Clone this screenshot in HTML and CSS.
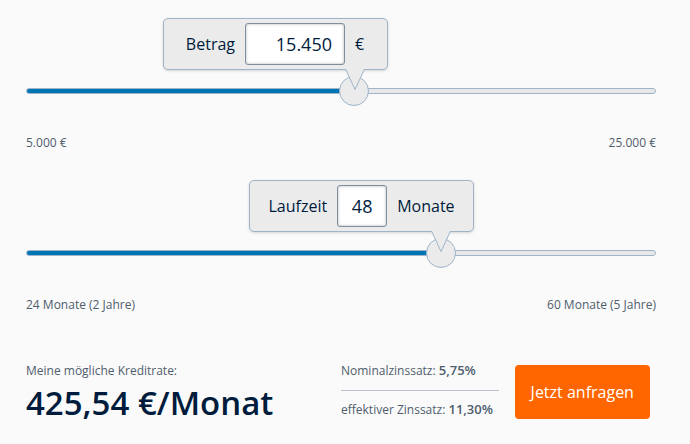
FILE: index.html
```html
<!DOCTYPE html>
<html lang="de">
<head>
    <meta charset="UTF-8">
    <meta name="viewport" content="width=device-width, initial-scale=1.0">
    <title>Kreditrechner</title>
    <link rel="stylesheet" href="styles.css">
</head>
<body>
    <form class="calculator">
        <div class="slider" style="--pos: 0.5225">
            <div class="bubble">
                <label for="amount">Betrag</label>
                <input class="value amount" type="text" id="amount" value="15.450">
                <span class="unit">€</span>
            </div>
            <input class="range" type="range" min="5000" max="25000" step="50" value="15450" aria-label="Betrag">
            <svg class="pointer" width="20" height="22" viewBox="0 0 20 22">
                <path d="M0.5 0 L10 20.5 L19.5 0" fill="#ebebeb" stroke="#9fb4c9"/>
            </svg>
            <div class="limits">
                <span>5.000 €</span>
                <span>25.000 €</span>
            </div>
        </div>

        <div class="slider" style="--pos: 0.6667">
            <div class="bubble">
                <label for="duration">Laufzeit</label>
                <input class="value duration" type="text" id="duration" value="48">
                <span class="unit">Monate</span>
            </div>
            <input class="range" type="range" min="24" max="60" step="12" value="48" aria-label="Laufzeit">
            <svg class="pointer" width="20" height="22" viewBox="0 0 20 22">
                <path d="M0.5 0 L10 20.5 L19.5 0" fill="#ebebeb" stroke="#9fb4c9"/>
            </svg>
            <div class="limits">
                <span>24 Monate (2 Jahre)</span>
                <span>60 Monate (5 Jahre)</span>
            </div>
        </div>

        <div class="summary">
            <div class="rate">
                <div>Meine mögliche Kreditrate:</div>
                <div class="rate-value">425,54 €/Monat</div>
            </div>
            <div class="interest">
                <div class="interest-row">Nominalzinssatz: <strong>5,75%</strong></div>
                <div class="interest-row">effektiver Zinssatz: <strong>11,30%</strong></div>
            </div>
            <button class="submit" type="button">Jetzt anfragen</button>
        </div>
    </form>
</body>
</html>
```
FILE: styles.css
```css
* {
    box-sizing: border-box;
}

body {
    margin: 0;
    padding: 18px 34px 20px 26px;
    background-color: #fafafa;
    color: #4f5d6d;
    font-family: "Open Sans", "Noto Sans", sans-serif;
    font-size: 12px;
    line-height: 18px;
}

.slider {
    position: relative;
    padding-top: 58px;
    margin-bottom: 28px;
    --thumb: calc((100% - 30px) * var(--pos) + 15px);
}

/* value box above the handle */
.bubble {
    position: absolute;
    top: 0;
    right: calc(100% - var(--thumb) - 33px);
    width: 225px;
    height: 52px;
    display: flex;
    align-items: center;
    justify-content: center;
    gap: 10px;
    background-color: #ebebeb;
    border: 1px solid #9fb4c9;
    border-radius: 5px;
    box-shadow: 0 1px 3px rgba(0, 0, 0, 0.15);
    color: #001c3d;
    font-size: 16px;
}

.value {
    height: 42px;
    border: 1px solid #7d8f9f;
    border-radius: 3px;
    background-color: #fff;
    box-shadow: inset 0 0 3px rgba(0, 0, 0, 0.3);
    color: #001c3d;
    font-family: inherit;
    font-size: 18px;
}

.amount {
    width: 100px;
    padding: 0 12px;
    text-align: right;
}

.duration {
    width: 50px;
    padding: 0;
    text-align: center;
}

.range {
    -webkit-appearance: none;
    appearance: none;
    display: block;
    width: 100%;
    height: 30px;
    margin: 0;
    background: none;
}

.range::-webkit-slider-runnable-track {
    height: 6px;
    border: 1px solid #9fb4c9;
    border-radius: 3px;
    background: linear-gradient(to right, #0075b4 var(--thumb), #e8e8ea var(--thumb)) border-box;
}

.range::-webkit-slider-thumb {
    -webkit-appearance: none;
    width: 30px;
    height: 30px;
    margin-top: -13px;
    border: 1px solid #9fb4c9;
    border-radius: 50%;
    background-color: #ebebeb;
}

.pointer {
    position: absolute;
    top: 51px;
    left: calc(var(--thumb) - 10px);
    pointer-events: none;
}

.limits {
    display: flex;
    justify-content: space-between;
    padding-top: 28px;
}

.summary {
    display: grid;
    grid-template-columns: 2fr 1fr 1fr;
    padding-top: 20px;
}

.rate-value {
    color: #001c3d;
    font-size: 33px;
    font-weight: 600;
    line-height: 46px;
    white-space: nowrap;
}

.interest-row {
    padding-bottom: 10px;
}

.interest-row + .interest-row {
    padding-top: 10px;
    border-top: 1px solid #bcc3ca;
}

.interest-row strong {
    font-size: 13px;
    font-weight: 600;
    line-height: 13px;
}

.submit {
    height: 54px;
    margin: 3px 6px 0 16px;
    padding: 0;
    border: none;
    border-radius: 4px;
    background-color: #ff6600;
    color: #fff;
    font-family: inherit;
    font-size: 16px;
    cursor: pointer;
}
```
